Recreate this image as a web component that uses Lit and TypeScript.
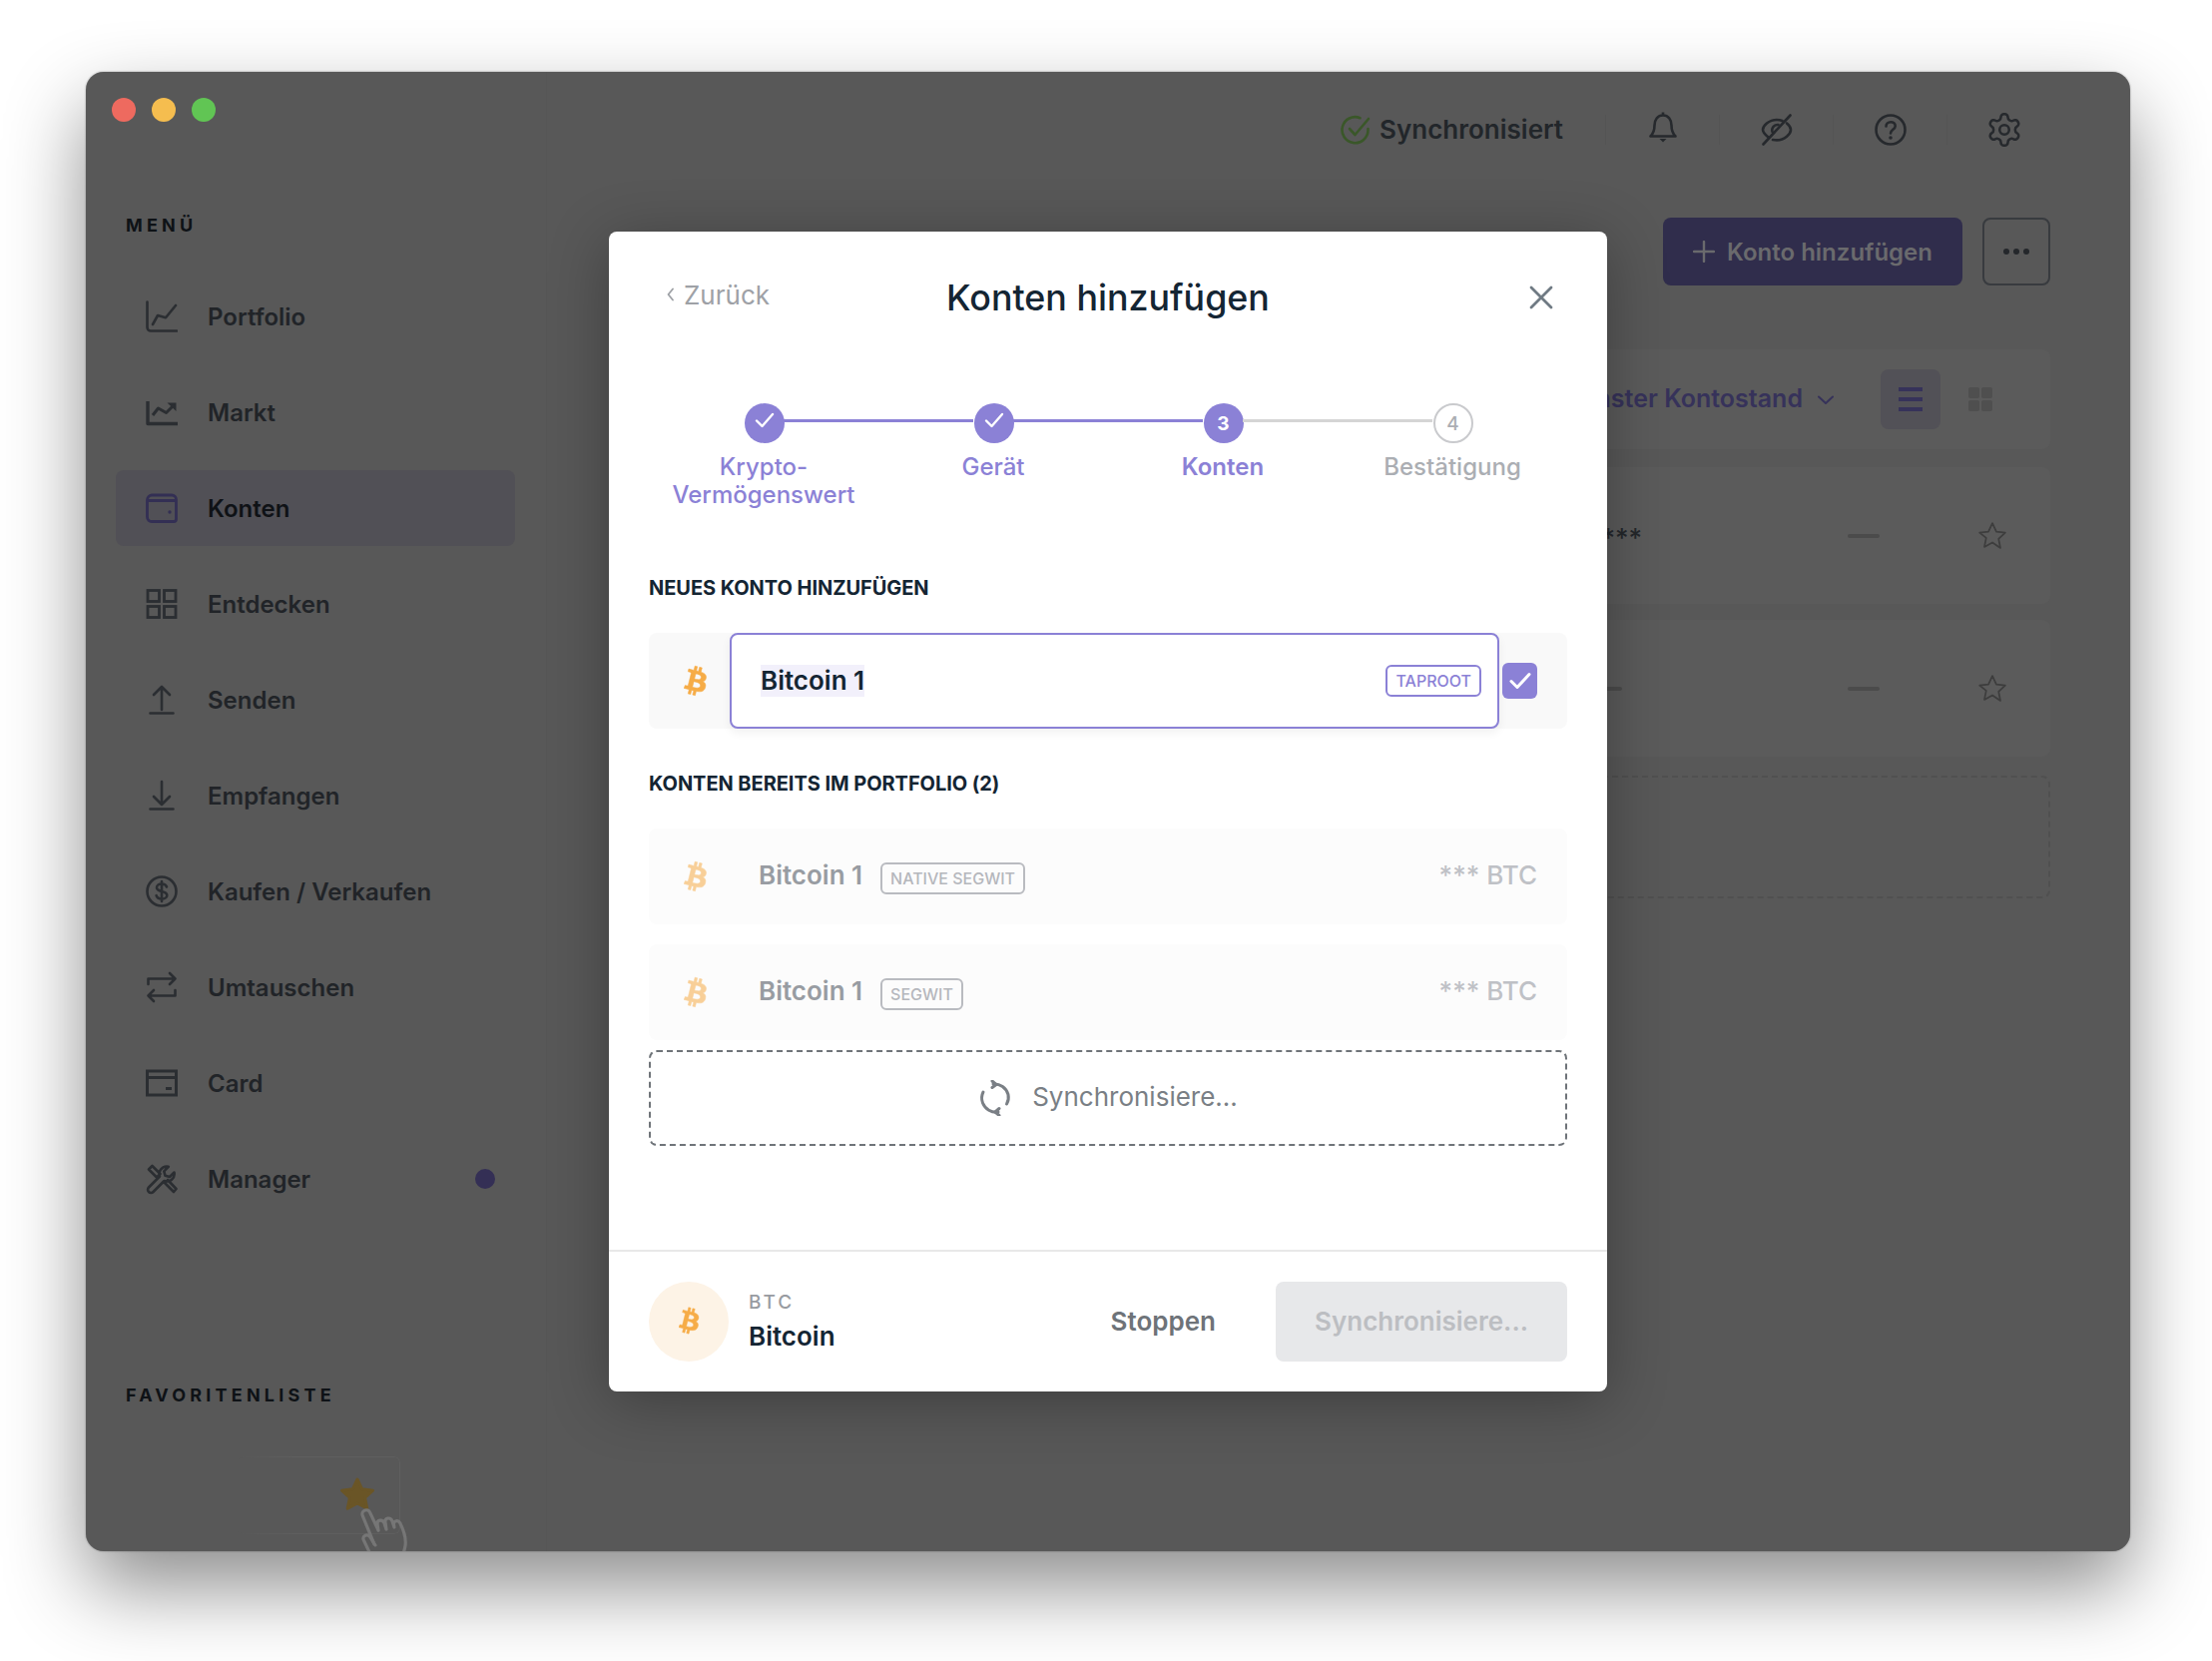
import { LitElement, html, css } from "lit";
import { customElement } from "lit/decorators.js";

const BTC_D =
  "M23.189 14.02c.314-2.096-1.283-3.223-3.465-3.975l.708-2.84-1.728-.43-.69 2.765c-.454-.114-.92-.22-1.385-.326l.695-2.783L15.596 6l-.708 2.839c-.376-.086-.746-.17-1.104-.26l.002-.009-2.384-.595-.46 1.846s1.283.294 1.256.312c.7.175.826.638.805 1.006l-.806 3.235c.048.012.11.03.18.057l-.183-.045-1.13 4.532c-.086.212-.303.531-.793.41.018.025-1.256-.313-1.256-.313l-.858 1.978 2.25.561c.418.105.828.215 1.231.318l-.715 2.872 1.727.43.708-2.84c.472.127.93.245 1.378.357l-.706 2.828 1.728.43.715-2.866c2.948.558 5.164.333 6.097-2.333.752-2.146-.037-3.385-1.588-4.192 1.13-.26 1.98-1.003 2.207-2.538zm-3.95 5.538c-.533 2.147-4.148.986-5.32.695l.95-3.805c1.172.293 4.929.872 4.37 3.11zm.535-5.569c-.487 1.953-3.495.96-4.47.717l.86-3.45c.975.243 4.118.696 3.61 2.733z";

const btc = () => html`<svg class="btc" viewBox="8.2 5.2 16.6 21.6" aria-hidden="true"><path fill="currentColor" stroke="currentColor" stroke-width="0.35" d="${BTC_D}"/></svg>`;

const s = (d: string) => html`<svg class="mi" width="32" height="32" viewBox="0 0 32 32" fill="none" stroke="currentColor" stroke-width="2.6" stroke-linecap="round" stroke-linejoin="round"><path d="${d}"/></svg>`;

const menuIcons: Record<string, unknown> = {
  portfolio: s("M1.5 1.5V27a3.5 3.5 0 0 0 3.5 3.5h26M7 24l5-9 8 2.2L30 5"),
  market: html`<svg class="mi" width="32" height="32" viewBox="0 0 32 32" fill="none" stroke="currentColor" stroke-width="3.4" stroke-linejoin="round"><path d="M2 5v22.500h30"/><path d="M7 19l5.500-7 8 4.500 6-6" stroke-width="3"/><path d="M21.500 6.500h9v8.500z" fill="currentColor" stroke="none"/></svg>`,
  wallet: html`<svg class="mi" width="32" height="32" viewBox="0 0 32 32" fill="none" stroke="currentColor" stroke-width="2.8" stroke-linejoin="round"><path d="M6 3h20a4.500 4.500 0 0 1 4.500 4.500V27a2.500 2.500 0 0 1-2.500 2.500H6a4.500 4.500 0 0 1-4.500-4.500V8A5 5 0 0 1 6 3zM1.500 8.500h28"/><circle cx="24" cy="20" r="1.700" fill="currentColor" stroke="none"/></svg>`,
  grid: html`<svg class="mi" width="32" height="32" viewBox="0 0 32 32" fill="none" stroke="currentColor" stroke-width="2.8"><rect x="2" y="2.500" width="11.500" height="11"/><rect x="18.500" y="2.500" width="11.500" height="11"/><rect x="2" y="18.500" width="11.500" height="11"/><rect x="18.500" y="18.500" width="11.500" height="11"/></svg>`,
  send: s("M16 3v23M8 11l8-8 8 8M4.500 29.500h23"),
  receive: s("M16 2v23M8 17l8 8 8-8M4.500 29.500h23"),
  dollar: html`<svg class="mi" width="32" height="32" viewBox="0 0 32 32" fill="none" stroke="currentColor" stroke-width="2.600" stroke-linecap="round"><circle cx="16" cy="16" r="14.500"/><path d="M21 11.500c-.6-1.800-2.700-3-5-3-2.800 0-5 1.500-5 3.700 0 5 10.300 2.500 10.300 7.700 0 2.200-2.400 3.600-5.300 3.600-2.600 0-4.800-1.200-5.400-3.300M16 6v20"/></svg>`,
  swap: s("M2.500 13V7.500h27M24 2l5.500 5.500L24 13M29.500 19v5.500h-27M8 19l-5.500 5.500L8 30"),
  card: html`<svg class="mi" width="32" height="32" viewBox="0 0 32 32" fill="none" stroke="currentColor" stroke-width="3"><rect x="1.500" y="4" width="29" height="24"/><path d="M1.500 10.500h29M20 21.500h6"/></svg>`,
  tools: s("M21 3.500a7.500 7.500 0 0 0-7 10L3 24.500a3 3 0 0 0 4.500 4.500l11-11a7.500 7.500 0 0 0 10-8.500l-4.500 4.500-4.500-1.200-1.200-4.500 4.500-4.500a7.500 7.500 0 0 0-1.800-.3zM3 6.500L6.500 3l8 8-3.500 3.500-8-8zM19 20l9 9 2.500-3-8.500-9"),
};

const menu = [
  { label: "Portfolio", icon: "portfolio" },
  { label: "Markt", icon: "market" },
  { label: "Konten", icon: "wallet", active: true },
  { label: "Entdecken", icon: "grid" },
  { label: "Senden", icon: "send" },
  { label: "Empfangen", icon: "receive" },
  { label: "Kaufen / Verkaufen", icon: "dollar" },
  { label: "Umtauschen", icon: "swap" },
  { label: "Card", icon: "card" },
  { label: "Manager", icon: "tools", dot: true },
];

const steps = [
  { lines: ["Krypto-", "Vermögenswert"], state: "done", lineOn: true },
  { lines: ["Gerät"], state: "done", lineOn: true },
  { lines: ["Konten"], state: "current", n: "3", lineOn: false },
  { lines: ["Bestätigung"], state: "todo", n: "4" },
];

const starOutline = html`<svg class="star" viewBox="0 0 28 28" fill="none" stroke="currentColor" stroke-width="1.600" stroke-linejoin="round"><path d="M14 2l3.700 7.900 8.300 1-6.200 5.800 1.700 8.500L14 20l-7.500 4.200 1.700-8.500L2 10.900l8.300-1z"/></svg>`;

@customElement("app-root")
export class AppRoot extends LitElement {
  static styles = css`
    :host {
      display: block;
      height: 1664px;
      background: #fff;
      font-family: Inter, "Liberation Sans", sans-serif;
      overflow: hidden;
    }
    .window {
      position: relative;
      width: 2048px;
      height: 1482px;
      margin: 72px 0 0 86px;
      border-radius: 18px;
      background: #585858;
      box-shadow: 0 36px 80px rgba(0, 0, 0, 0.45), 0 0 2px rgba(0, 0, 0, 0.4);
      display: flex;
      overflow: hidden;
    }
    .sidebar {
      width: 462px;
      flex: none;
      box-sizing: border-box;
      border-right: 1px solid #565656;
      display: flex;
      flex-direction: column;
    }
    .lights {
      display: flex;
      gap: 16px;
      margin: 26px 0 0 26px;
    }
    .light {
      width: 24px;
      height: 24px;
      border-radius: 50%;
    }
    .red { background: #ee6a5f; }
    .yellow { background: #f5bd4f; }
    .green { background: #61c554; }
    .cap {
      margin-left: 40px;
      font-size: 18px;
      line-height: 24px;
      font-weight: 700;
      letter-spacing: 4.200px;
      color: #0e1216;
      white-space: nowrap;
    }
    .cap-menu { margin-top: 92px; }
    .cap-fav { margin-top: 167px; }
    .menu {
      margin: 41px 0 0 30px;
      width: 400px;
      display: flex;
      flex-direction: column;
      gap: 20px;
    }
    .item {
      height: 76px;
      box-sizing: border-box;
      padding: 0 20px 0 30px;
      display: flex;
      align-items: center;
      gap: 30px;
      border-radius: 8px;
      color: #212428;
      font-size: 24px;
      font-weight: 600;
    }
    .item.active {
      background: #515056;
      color: #0f1216;
    }
    .item.active .mi { color: #332f54; }
    .item .mi { color: #2b2e32; flex: none; }
    .dot {
      margin-left: auto;
      width: 20px;
      height: 20px;
      border-radius: 50%;
      background: #342f55;
    }
    .fav {
      position: relative;
      margin: 49px 0 0 151px;
      width: 164px;
      height: 78px;
      color: #6a5526;
    }
    .fav::before {
      content: "";
      position: absolute;
      inset: 0;
      border: 1px solid #5f5f5f;
      border-left: 0;
      border-radius: 6px;
      -webkit-mask-image: linear-gradient(to right, transparent, #000 35%);
      mask-image: linear-gradient(to right, transparent, #000 35%);
    }
    .fav-star {
      position: absolute;
      left: 103px;
      top: 20px;
      width: 36px;
      height: 36px;
    }
    .hand {
      position: absolute;
      left: 123px;
      top: 52px;
      width: 53px;
      height: 55px;
      color: #767676;
    }
    .main {
      flex: 1;
      min-width: 0;
      display: flex;
      flex-direction: column;
    }
    .topbar {
      height: 116px;
      padding-right: 70px;
      display: flex;
      justify-content: flex-end;
      align-items: center;
      color: #26292d;
    }
    .sync {
      display: flex;
      align-items: center;
      gap: 9px;
      padding: 0 42px 2px 0;
      font-size: 26px;
      font-weight: 600;
      color: #22262a;
    }
    .sync svg { color: #3a5729; margin-top: 2px; }
    .tb-cell {
      width: 114px;
      height: 30px;
      box-sizing: border-box;
      display: flex;
      align-items: center;
      justify-content: center;
      border-left: 1px solid #545454;
    }
    .bell { margin-bottom: 7px; }
    .actions {
      margin: 30px 80px 0 0;
      display: flex;
      justify-content: flex-end;
      gap: 20px;
    }
    .add {
      width: 300px;
      height: 68px;
      border-radius: 8px;
      background: #302d4c;
      color: #6a6a6d;
      display: flex;
      align-items: center;
      justify-content: center;
      gap: 12px;
      font-size: 24px;
      font-weight: 600;
    }
    .more {
      width: 68px;
      height: 68px;
      box-sizing: border-box;
      border: 2.500px solid #383b3f;
      border-radius: 8px;
      display: flex;
      align-items: center;
      justify-content: center;
      gap: 4px;
    }
    .more i {
      width: 6px;
      height: 6px;
      border-radius: 50%;
      background: #24272b;
    }
    .content {
      margin: 64px 80px 0 80px;
      display: flex;
      flex-direction: column;
    }
    .panel {
      background: #5b5b5b;
      border-radius: 8px;
      display: flex;
      align-items: center;
      justify-content: flex-end;
    }
    .filter {
      height: 100px;
      padding-right: 58px;
      font-size: 25px;
      font-weight: 600;
      color: #36325a;
    }
    .filter span { padding-bottom: 2px; }
    .chev { margin: 2px 47px 0 15px; }
    .tog {
      width: 60px;
      height: 60px;
      border-radius: 8px;
      background: #525157;
      display: flex;
      flex-direction: column;
      align-items: center;
      justify-content: center;
      gap: 6px;
    }
    .tog i {
      width: 24px;
      height: 4px;
      background: #36325a;
    }
    .gridt {
      margin-left: 28px;
      display: grid;
      grid-template-columns: 11px 11px;
      gap: 2px;
    }
    .gridt i {
      width: 11px;
      height: 11px;
      border-radius: 2px;
      background: #4f4f4f;
    }
    .row-a {
      margin-top: 18px;
      height: 137px;
    }
    .row-b {
      margin-top: 16px;
      height: 137px;
    }
    .stars {
      font-size: 26px;
      font-weight: 500;
      color: #24272b;
      margin-right: 206px;
      line-height: 1;
      padding-top: 4px;
    }
    .ph {
      width: 32px;
      height: 4px;
      border-radius: 2px;
      background: #4b4b4b;
      flex: none;
    }
    .ph-a { margin-right: 226px; }
    .ph-b { margin-right: 98px; }
    .star {
      display: block;
      width: 30px;
      height: 30px;
      margin: 0 43px 0 0;
      color: #3d3d3d;
    }
    .drop {
      margin-top: 19px;
      height: 123px;
      box-sizing: border-box;
      border: 2px dashed #505050;
      border-radius: 8px;
    }

    /* modal */
    .modal {
      position: absolute;
      left: 524px;
      top: 160px;
      width: 1000px;
      height: 1162px;
      border-radius: 8px;
      background: #fff;
      box-shadow: 0 10px 60px rgba(0, 0, 0, 0.3);
      display: flex;
      flex-direction: column;
      color: #142533;
    }
    .head {
      margin-top: 40px;
      height: 52px;
      padding: 0 54px;
      display: grid;
      grid-template-columns: 1fr auto 1fr;
      align-items: center;
    }
    .back {
      display: flex;
      align-items: center;
      gap: 10px;
      margin: -6px 0 0 4px;
      font-size: 26px;
      color: #9ea1a6;
    }
    .title {
      font-size: 35.800px;
      font-weight: 500;
      line-height: 52px;
      white-space: nowrap;
    }
    .close {
      justify-self: end;
      color: #6f7a83;
      display: block;
    }
    .body {
      flex: 1;
      padding: 0 40px;
      display: flex;
      flex-direction: column;
    }
    .steps {
      margin-top: 80px;
      display: flex;
      height: 106px;
    }
    .step {
      position: relative;
      width: 230px;
      display: flex;
      flex-direction: column;
      align-items: center;
      color: #8b81d6;
    }
    .step.todo { color: #abaeb3; }
    .step.has-line::after {
      content: "";
      position: absolute;
      left: 135px;
      top: 16px;
      width: 190px;
      height: 3px;
      background: #d5d5d5;
    }
    .step.line-on::after { background: #8b81d6; }
    .circle {
      width: 40px;
      height: 40px;
      margin-left: 1px;
      box-sizing: border-box;
      border-radius: 50%;
      background: #8b81d6;
      color: #fff;
      font-size: 19px;
      font-weight: 700;
      display: flex;
      align-items: center;
      justify-content: center;
    }
    .step.todo .circle {
      background: #fff;
      border: 2px solid #c9cacd;
      color: #abaeb3;
      font-weight: 500;
    }
    .step-check { margin-top: -7px; }
    .step-label {
      margin-top: 10px;
      text-align: center;
      font-size: 24px;
      line-height: 28px;
      font-weight: 500;
      white-space: nowrap;
    }
    .step.current .step-label { font-weight: 600; }
    .h {
      font-size: 20px;
      line-height: 24px;
      font-weight: 700;
      letter-spacing: -0.050px;
      color: #142533;
      white-space: nowrap;
    }
    .h-new { margin-top: 67px; }
    .h-old { margin-top: 43px; }
    .acc {
      margin-top: 33px;
      height: 96px;
      border-radius: 8px;
      background: #f9f9f9;
      display: flex;
      align-items: center;
    }
    .btc {
      display: block;
      color: #f6ac47;
      width: 25px;
      height: 32px;
      flex: none;
    }
    .acc .btc { margin-left: 35px; }
    .input {
      flex: 1;
      height: 96px;
      box-sizing: border-box;
      margin-left: 21px;
      border: 2.500px solid #8b81d6;
      border-radius: 8px;
      background: #fff;
      padding: 0 16px 0 29px;
      display: flex;
      align-items: center;
      justify-content: space-between;
      box-shadow: 0 4px 10px rgba(0, 0, 0, 0.06);
    }
    .sel {
      background: #f2f0fb;
      font-size: 26px;
      line-height: 32px;
      font-weight: 600;
      color: #142533;
    }
    .tag {
      height: 32px;
      box-sizing: border-box;
      padding: 0 8px;
      border: 2px solid currentColor;
      border-radius: 6px;
      display: flex;
      align-items: center;
      font-size: 16px;
      font-weight: 500;
      letter-spacing: 0;
    }
    .tag-p { color: #8b81d6; }
    .check {
      margin: 0 30px 0 3px;
      width: 35px;
      height: 36px;
      border-radius: 6px;
      background: #8b81d6;
      display: flex;
      align-items: center;
      justify-content: center;
    }
    .old {
      height: 96px;
      border-radius: 8px;
      background: #fcfcfc;
      display: flex;
      align-items: center;
      padding-right: 30px;
    }
    .old .btc { margin-left: 35px; opacity: 0.55; }
    .old-1 { margin-top: 33px; }
    .old-2 { margin-top: 20px; }
    .old-name {
      margin-left: 50px;
      font-size: 26px;
      font-weight: 600;
      color: #989ca2;
      padding-bottom: 4px;
    }
    .tag-g {
      margin: 4px 0 0 18px;
      color: #b9bbc0;
    }
    .tag-g span { color: #b5b7bc; }
    .amt {
      margin-left: auto;
      font-size: 26px;
      font-weight: 500;
      color: #bfc1c6;
      padding-bottom: 4px;
    }
    .syncing {
      margin-top: 10px;
      height: 96px;
      box-sizing: border-box;
      border: 2px dashed #6f7479;
      border-radius: 8px;
      display: flex;
      align-items: center;
      justify-content: center;
      gap: 20px;
      color: #7a7f85;
      font-size: 26px;
    }
    .syncing span { padding-bottom: 4px; }
    .foot {
      height: 142px;
      box-sizing: border-box;
      border-top: 2px solid #e8e8e8;
      padding: 30px 40px 0;
      display: flex;
      align-items: flex-start;
    }
    .coin {
      width: 80px;
      height: 80px;
      border-radius: 50%;
      background: #fdf3e6;
      display: flex;
      align-items: center;
      justify-content: center;
      padding: 0 0 2px 2px;
      box-sizing: border-box;
    }
    .coin .btc { width: 22px; height: 30px; }
    .coin-txt {
      margin-left: 20px;
      padding-top: 9px;
      display: flex;
      flex-direction: column;
    }
    .coin-sym {
      font-size: 19px;
      line-height: 24px;
      font-weight: 500;
      letter-spacing: 3px;
      color: #989ba1;
      margin-bottom: 7px;
    }
    .coin-name {
      font-size: 26px;
      line-height: 30px;
      font-weight: 600;
      color: #142533;
    }
    .stop {
      margin-left: auto;
      height: 78px;
      display: flex;
      align-items: center;
      font-size: 26px;
      font-weight: 600;
      color: #6e7379;
    }
    .go {
      margin-left: 60px;
      width: 292px;
      height: 80px;
      border-radius: 8px;
      background: #e7e8ea;
      color: #bcbec2;
      font-size: 26px;
      font-weight: 600;
      display: flex;
      align-items: center;
      justify-content: center;
      padding-bottom: 2px;
      box-sizing: border-box;
    }
  `;

  render() {
    return html`
      <div class="window">
        <aside class="sidebar">
          <div class="lights">
            <div class="light red"></div>
            <div class="light yellow"></div>
            <div class="light green"></div>
          </div>
          <div class="cap cap-menu">MENÜ</div>
          <nav class="menu">
            ${menu.map(
              (m) => html`<div class="item ${m.active ? "active" : ""}">
                ${menuIcons[m.icon]}<span>${m.label}</span>
                ${m.dot ? html`<div class="dot"></div>` : ""}
              </div>`
            )}
          </nav>
          <div class="cap cap-fav">FAVORITENLISTE</div>
          <div class="fav">
            <svg class="fav-star" viewBox="0 0 36 36"><path fill="currentColor" stroke="currentColor" stroke-width="3" stroke-linejoin="round" d="M18 3l4.700 9.800 10.800 1.400-7.900 7.300 2.200 10.800L18 27l-9.800 5.300 2.200-10.800-7.900-7.300 10.800-1.400z"/></svg>
            <svg class="hand" viewBox="0 0 50 52" fill="none" stroke="currentColor" stroke-width="3" stroke-linecap="round" stroke-linejoin="round"><path d="M14 34L3 7a3.800 3.800 0 0 1 7-3l8 17-1-6c-.5-4 5-5 6.500-1l2 6-1-7c-.5-4 5-5 6.500-1l2 6-.5-3c0-3.500 4.500-4 6-1 3 6 6 13 5 21-.5 4-2 8-3 12"/><path d="M13 49L4 30c-1.500-3.500 3-6.500 6-3l5 8"/></svg>
          </div>
        </aside>
        <main class="main">
          <div class="topbar">
            <div class="sync">
              <svg width="30" height="30" viewBox="0 0 30 30" fill="none" stroke="currentColor" stroke-width="2.600" stroke-linecap="round" stroke-linejoin="round"><path d="M27.500 14v1.500A13 13 0 1 1 19.500 3.200"/><path d="M9 14l5.500 6L28 4"/></svg>
              <span>Synchronisiert</span>
            </div>
            <div class="tb-cell">
              <svg class="bell" width="30" height="32" viewBox="0 0 30 32" fill="none" stroke="currentColor" stroke-width="2.600" stroke-linejoin="round"><path d="M15 1.500v3M15 4.500c-5.500 0-8.500 4.500-8.500 10 0 5-1 8-4 11h25c-3-3-4-6-4-11 0-5.500-3-10-8.500-10z"/><path d="M11.500 28h7l-3.500 3.500z" fill="currentColor" stroke="none"/></svg>
            </div>
            <div class="tb-cell">
              <svg width="32" height="32" viewBox="0 0 32 32" fill="none" stroke="currentColor" stroke-width="2.600" stroke-linecap="round"><path d="M2.500 30.500L29.500 1.500"/><path d="M7.500 23.500C4.500 21 2 18.500 2 16 2 12 8 6 16 6c2 0 4 .4 5.500 1M12 26c1.200.2 2.700.4 4 .4 8 0 14-6.400 14-10.400 0-2-1.500-4.500-4-6.500M11.500 18a5.500 5.500 0 0 1 6-7"/></svg>
            </div>
            <div class="tb-cell">
              <svg width="32" height="32" viewBox="0 0 32 32" fill="none" stroke="currentColor" stroke-width="2.600" stroke-linecap="round"><circle cx="16" cy="16" r="14.500"/><path d="M11.500 12.500c0-2.500 2-4.300 4.700-4.300 2.500 0 4.500 1.700 4.500 4 0 3.500-4.700 3.800-4.700 7.300"/><circle cx="16" cy="24" r="1.800" fill="currentColor" stroke="none"/></svg>
            </div>
            <div class="tb-cell">
              <svg width="38" height="38" viewBox="0 0 24 24" fill="none" stroke="currentColor" stroke-width="1.600" stroke-linecap="round" stroke-linejoin="round"><path d="M12.220 2h-.44a2 2 0 0 0-2 2v.18a2 2 0 0 1-1 1.730l-.43.25a2 2 0 0 1-2 0l-.15-.08a2 2 0 0 0-2.730.73l-.22.38a2 2 0 0 0 .73 2.730l.15.1a2 2 0 0 1 1 1.720v.51a2 2 0 0 1-1 1.740l-.15.09a2 2 0 0 0-.73 2.730l.22.38a2 2 0 0 0 2.730.73l.15-.08a2 2 0 0 1 2 0l.43.25a2 2 0 0 1 1 1.730V20a2 2 0 0 0 2 2h.44a2 2 0 0 0 2-2v-.18a2 2 0 0 1 1-1.730l.43-.25a2 2 0 0 1 2 0l.15.08a2 2 0 0 0 2.730-.73l.22-.39a2 2 0 0 0-.73-2.730l-.15-.08a2 2 0 0 1-1-1.740v-.5a2 2 0 0 1 1-1.740l.15-.09a2 2 0 0 0 .73-2.730l-.22-.38a2 2 0 0 0-2.730-.73l-.15.08a2 2 0 0 1-2 0l-.43-.25a2 2 0 0 1-1-1.730V4a2 2 0 0 0-2-2z"/><circle cx="12" cy="12" r="3"/></svg>
            </div>
          </div>
          <div class="actions">
            <div class="add">
              <svg width="22" height="22" viewBox="0 0 22 22" stroke="currentColor" stroke-width="2.400" stroke-linecap="round"><path d="M11 1v20M1 11h20"/></svg>
              <span>Konto hinzufügen</span>
            </div>
            <div class="more"><i></i><i></i><i></i></div>
          </div>
          <div class="content">
            <div class="panel filter">
              <span>Höchster Kontostand</span>
              <svg class="chev" width="16" height="10" viewBox="0 0 16 10" fill="none" stroke="currentColor" stroke-width="2" stroke-linecap="round" stroke-linejoin="round"><path d="M1 1.500l7 6.500 7-6.500"/></svg>
              <div class="tog"><i></i><i></i><i></i></div>
              <div class="gridt"><i></i><i></i><i></i><i></i></div>
            </div>
            <div class="panel row-a">
              <span class="stars">***</span>
              <div class="ph ph-b"></div>
              ${starOutline}
            </div>
            <div class="panel row-b">
              <div class="ph ph-a"></div>
              <div class="ph ph-b"></div>
              ${starOutline}
            </div>
            <div class="drop"></div>
          </div>
        </main>

        <section class="modal">
          <header class="head">
            <div class="back">
              <svg width="7" height="14" viewBox="0 0 7 14" fill="none" stroke="currentColor" stroke-width="1.800" stroke-linecap="round" stroke-linejoin="round"><path d="M6 1.500L1.500 7 6 12.500"/></svg>
              <span>Zurück</span>
            </div>
            <div class="title">Konten hinzufügen</div>
            <svg class="close" width="24" height="24" viewBox="0 0 24 24" fill="none" stroke="currentColor" stroke-width="2.800" stroke-linecap="round"><path d="M2 2l20 20M22 2L2 22"/></svg>
          </header>
          <div class="body">
            <div class="steps">
              ${steps.map(
                (st, i) => html`<div class="step ${st.state} ${i < 3 ? "has-line" : ""} ${st.lineOn ? "line-on" : ""}">
                  <div class="circle">
                    ${st.state === "done"
                      ? html`<svg class="step-check" width="20" height="16" viewBox="0 0 20 16" fill="none" stroke="currentColor" stroke-width="2.400" stroke-linecap="round" stroke-linejoin="round"><path d="M2 8.500l5.500 5.500L18 2"/></svg>`
                      : st.n}
                  </div>
                  <div class="step-label">${st.lines.map((l, j) => html`${j ? html`<br />` : ""}${l}`)}</div>
                </div>`
              )}
            </div>
            <div class="h h-new">NEUES KONTO HINZUFÜGEN</div>
            <div class="acc">
              ${btc()}
              <div class="input">
                <span class="sel">Bitcoin 1</span>
                <span class="tag tag-p">TAPROOT</span>
              </div>
              <div class="check">
                <svg width="22" height="18" viewBox="0 0 22 18" fill="none" stroke="#fff" stroke-width="3" stroke-linecap="round" stroke-linejoin="round"><path d="M2 9.500l6 6L20 2.500"/></svg>
              </div>
            </div>
            <div class="h h-old">KONTEN BEREITS IM PORTFOLIO (2)</div>
            ${["NATIVE SEGWIT", "SEGWIT"].map(
              (t, i) => html`<div class="old old-${i + 1}">
                ${btc()}
                <span class="old-name">Bitcoin 1</span>
                <span class="tag tag-g"><span>${t}</span></span>
                <span class="amt">*** BTC</span>
              </div>`
            )}
            <div class="syncing">
              <svg width="34" height="36" viewBox="0 0 34 36" fill="none" stroke="currentColor" stroke-width="3" stroke-linecap="round" stroke-linejoin="round"><path d="M15 4A14.500 14.500 0 0 1 30 14.500c.7 3.500 0 7-1.500 9.500M20 32A14.500 14.500 0 0 1 4.500 23C3 19 3.500 15 5 12"/><path d="M14 1l4 3.500-4 3M21 28.500L17 32l4 3.500"/></svg>
              <span>Synchronisiere...</span>
            </div>
          </div>
          <footer class="foot">
            <div class="coin">${btc()}</div>
            <div class="coin-txt">
              <div class="coin-sym">BTC</div>
              <div class="coin-name">Bitcoin</div>
            </div>
            <div class="stop">Stoppen</div>
            <div class="go">Synchronisiere...</div>
          </footer>
        </section>
      </div>
    `;
  }
}
